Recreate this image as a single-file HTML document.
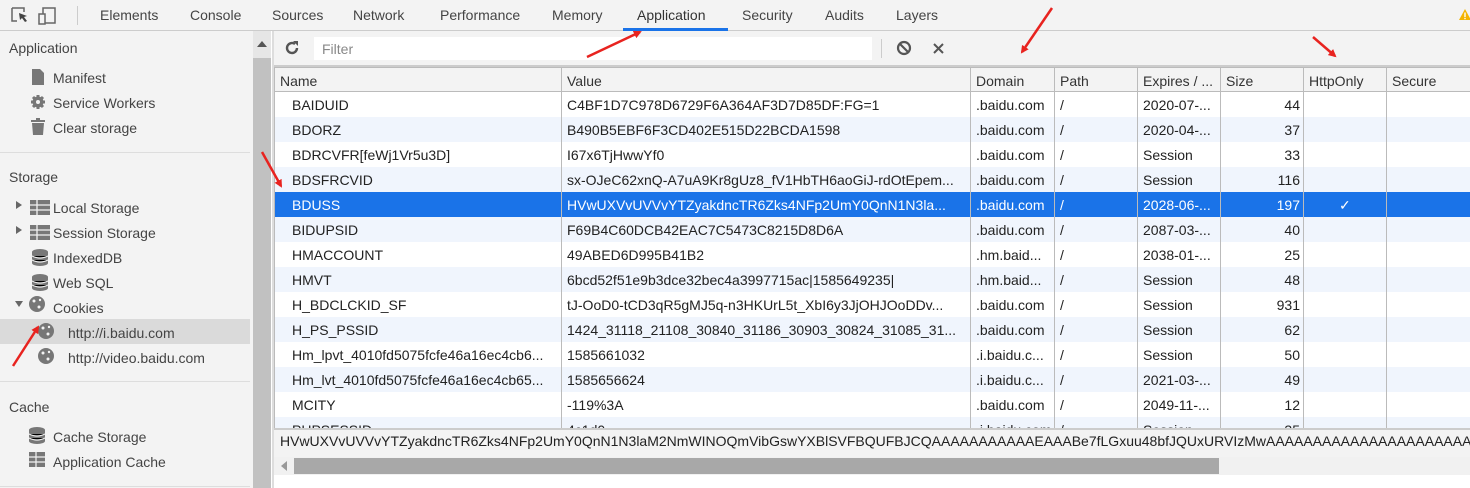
<!DOCTYPE html>
<html><head><meta charset="utf-8"><style>
*{margin:0;padding:0;box-sizing:border-box}
body{width:1470px;height:488px;overflow:hidden;background:#fff;font-family:"Liberation Sans",sans-serif;font-size:14px;color:#333;position:relative}
.a{position:absolute;white-space:nowrap}
#top{left:0;top:0;width:1470px;height:31px;background:#f3f3f3;border-bottom:1px solid #ccc}
.tab{top:7px;color:#444}
#side{left:0;top:31px;width:253px;height:457px;background:#f3f3f3}
.sh{color:#444;font-size:14px}
.si{color:#444}
#sb{left:253px;top:31px;width:18px;height:457px;background:#c1c1c1}
#main{left:272px;top:31px;width:1198px;height:457px;background:#f3f3f3}
.row{left:274px;width:1196px;height:25px}
.c{position:absolute;top:5px;overflow:hidden}
.vl{position:absolute;top:67px;width:1px;height:361px;background:#bbb}
</style></head><body>
<div id="top" class="a">
 <svg class="a" style="left:10px;top:6px" width="50" height="20"><path d="M2 2h12v4M2 2v13h5" stroke="#666" fill="none" stroke-width="1.5"/><path d="M9 7l8 3-3 1 3 4-2 1-3-4-2 2z" fill="#444"/><rect x="33" y="2" width="12" height="15" stroke="#666" fill="none" stroke-width="1.5"/><rect x="29" y="8" width="6" height="10" stroke="#666" fill="#f3f3f3" stroke-width="1.5"/></svg>
 <div class="a" style="left:77px;top:6px;width:1px;height:19px;background:#ccc"></div>
 <div class="a tab" style="left:100px">Elements</div>
 <div class="a tab" style="left:190px">Console</div>
 <div class="a tab" style="left:272px">Sources</div>
 <div class="a tab" style="left:353px">Network</div>
 <div class="a tab" style="left:440px">Performance</div>
 <div class="a tab" style="left:552px">Memory</div>
 <div class="a tab" style="left:637px;color:#333">Application</div>
 <div class="a" style="left:623px;top:28px;width:105px;height:3px;background:#1a73e8"></div>
 <div class="a tab" style="left:742px">Security</div>
 <div class="a tab" style="left:825px">Audits</div>
 <div class="a tab" style="left:896px">Layers</div>
 <svg class="a" style="left:1458px;top:8px" width="14" height="14"><path d="M7 1L13 12H1z" fill="#f4b400"/><rect x="6.3" y="4.5" width="1.4" height="4.5" fill="#fff"/><rect x="6.3" y="9.8" width="1.4" height="1.4" fill="#fff"/></svg>
</div>
<div id="side" class="a">
 <div class="a sh" style="left:9px;top:9px">Application</div>
 <svg class="a" style="left:30px;top:37px" width="16" height="100"><path d="M2 1h8l4 4v12H2z" fill="#777"/><circle cx="8" cy="34" r="5.5" fill="#777"/><g stroke="#777" stroke-width="3"><path d="M8 27v14M1 34h14M3 29l10 10M13 29L3 39"/></g><circle cx="8" cy="34" r="2" fill="#f3f3f3"/><rect x="1" y="52" width="14" height="2" fill="#777"/><rect x="6" y="50" width="4" height="2" fill="#777"/><path d="M2 55h12l-1 12H3z" fill="#777"/></svg>
 <div class="a si" style="left:53px;top:39px">Manifest</div>
 <div class="a si" style="left:53px;top:64px">Service Workers</div>
 <div class="a si" style="left:53px;top:89px">Clear storage</div>
 <div class="a" style="left:0;top:121px;width:250px;height:1px;background:#ddd"></div>
 <div class="a sh" style="left:9px;top:138px">Storage</div>
 <svg class="a" style="left:14px;top:166px" width="40" height="175">
  <path d="M2 4l6 4-6 4z M2 29l6 4-6 4z" fill="#666"/>
  <g fill="#777"><rect x="16" y="3" width="20" height="15"/><rect x="16" y="28" width="20" height="15"/></g>
  <g stroke="#f3f3f3" stroke-width="1.3"><path d="M16 8h20M16 13h20M23 3v15M16 33h20M16 38h20M23 28v15"/></g>
  <g fill="#777"><ellipse cx="26" cy="55" rx="8" ry="3"/><rect x="18" y="55" width="16" height="11"/><ellipse cx="26" cy="66" rx="8" ry="3"/><ellipse cx="26" cy="80" rx="8" ry="3"/><rect x="18" y="80" width="16" height="11"/><ellipse cx="26" cy="91" rx="8" ry="3"/></g>
  <g stroke="#f3f3f3" stroke-width="1.2"><path d="M18 59q8 4 16 0M18 63q8 4 16 0M18 84q8 4 16 0M18 88q8 4 16 0"/></g>
  <path d="M1 104l8 0-4 6z" fill="#666"/>
  <circle cx="23" cy="107" r="8" fill="#777"/><g fill="#f3f3f3"><circle cx="20" cy="104" r="1.5"/><circle cx="25" cy="110" r="1.5"/><circle cx="26" cy="103" r="1.2"/></g>
 </svg>
 <div class="a si" style="left:53px;top:169px">Local Storage</div>
 <div class="a si" style="left:53px;top:194px">Session Storage</div>
 <div class="a si" style="left:53px;top:219px">IndexedDB</div>
 <div class="a si" style="left:53px;top:244px">Web SQL</div>
 <div class="a si" style="left:53px;top:269px">Cookies</div>
 <div class="a" style="left:0;top:288px;width:250px;height:25px;background:#dadada"></div>
 <svg class="a" style="left:37px;top:290px" width="20" height="50"><circle cx="9" cy="10" r="8" fill="#777"/><circle cx="9" cy="35" r="8" fill="#777"/><g fill="#f3f3f3"><circle cx="6" cy="7" r="1.5"/><circle cx="11" cy="13" r="1.5"/><circle cx="12" cy="6" r="1.2"/><circle cx="6" cy="32" r="1.5"/><circle cx="11" cy="38" r="1.5"/><circle cx="12" cy="31" r="1.2"/></g></svg>
 <div class="a si" style="left:68px;top:294px">http://i.baidu.com</div>
 <div class="a si" style="left:68px;top:319px">http://video.baidu.com</div>
 <div class="a" style="left:0;top:350px;width:250px;height:1px;background:#ddd"></div>
 <div class="a sh" style="left:9px;top:368px">Cache</div>
 <svg class="a" style="left:28px;top:396px" width="20" height="40"><g fill="#777"><ellipse cx="9" cy="3" rx="8" ry="3"/><rect x="1" y="3" width="16" height="11"/><ellipse cx="9" cy="14" rx="8" ry="3"/><rect x="1" y="25" width="16" height="15"/></g><g stroke="#f3f3f3" stroke-width="1.2"><path d="M1 7q8 4 16 0M1 11q8 4 16 0M1 30h16M1 35h16M8 25v15"/></g></svg>
 <div class="a si" style="left:53px;top:398px">Cache Storage</div>
 <div class="a si" style="left:53px;top:423px">Application Cache</div>
 <div class="a" style="left:0;top:455px;width:250px;height:1px;background:#ddd"></div>
</div>
<div id="sb" class="a" style="background:#e6e6e6"><div class="a" style="left:0;top:27px;width:18px;height:430px;background:#c1c1c1"></div><svg class="a" style="left:4px;top:10px" width="10" height="6"><path d="M0 6L5 0l5 6z" fill="#555"/></svg></div>
<div id="main" class="a">
 <svg class="a" style="left:12px;top:9px" width="16" height="16"><path d="M13 8a5 5 0 1 1-2-4" stroke="#555" stroke-width="2.4" fill="none"/><path d="M9 1h5v5z" fill="#555"/></svg>
 <div class="a" style="left:42px;top:6px;width:558px;height:23px;background:#fff;color:#888;padding:4px 8px">Filter</div>
 <div class="a" style="left:609px;top:8px;width:1px;height:19px;background:#ccc"></div>
 <svg class="a" style="left:624px;top:9px" width="60" height="17"><circle cx="8" cy="8" r="6" stroke="#555" stroke-width="2.2" fill="none"/><path d="M4 4l8 8" stroke="#555" stroke-width="2.2"/><path d="M38 4l9 9M47 4l-9 9" stroke="#555" stroke-width="2"/></svg>
 <div class="a" style="left:0;top:34px;width:1198px;height:2px;background:#ccc"></div>
</div>
<div class="a" style="left:274px;top:67px;width:1196px;height:361px;background:#fff"></div>
<div class="a" style="left:274px;top:67px;width:1196px;height:25px;background:#f3f3f3;border-top:1px solid #bbb;border-bottom:1px solid #bbb"></div>
<div id="rows"></div>
<div class="a" style="left:274px;top:428px;width:1196px;height:2px;background:#ccc"></div>
<div class="a" style="left:280px;top:433px;color:#222">HVwUXVvUVVvYTZyakdncTR6Zks4NFp2UmY0QnN1N3laM2NmWINOQmVibGswYXBlSVFBQUFBJCQAAAAAAAAAAAEAAABe7fLGxuu48bfJQUxURVIzMwAAAAAAAAAAAAAAAAAAAAAAAAAA</div>
<div class="a" style="left:274px;top:457px;width:1196px;height:18px;background:#f1f1f1"></div>
<svg class="a" style="left:281px;top:461px" width="6" height="10"><path d="M6 0L0 5l6 5z" fill="#999"/></svg>
<div class="a" style="left:294px;top:458px;width:925px;height:16px;background:#a8a8a8"></div>
<div class="a" style="left:274px;top:475px;width:1196px;height:13px;background:#fff"></div>
<div class="a" style="left:272px;top:31px;width:2px;height:457px;background:#ddd"></div>
<svg class="a" style="left:0;top:0" width="1470" height="488">
<defs><marker id="m" markerWidth="8" markerHeight="8" refX="6" refY="4" orient="auto" markerUnits="userSpaceOnUse"><path d="M0 0L8 4L0 8z" fill="#e8231f"/></marker></defs>
<g stroke="#e8231f" stroke-width="2.5" marker-end="url(#m)" fill="none">
<path d="M587 57L640 32"/><path d="M1052 8L1022 52"/><path d="M1313 37L1335 56"/><path d="M262 152L281 186"/><path d="M13 366L38 327"/>
</g></svg>
<script>
var d=[["BAIDUID","C4BF1D7C978D6729F6A364AF3D7D85DF:FG=1",".baidu.com","2020-07-...","44"],
["BDORZ","B490B5EBF6F3CD402E515D22BCDA1598",".baidu.com","2020-04-...","37"],
["BDRCVFR[feWj1Vr5u3D]","I67x6TjHwwYf0",".baidu.com","Session","33"],
["BDSFRCVID","sx-OJeC62xnQ-A7uA9Kr8gUz8_fV1HbTH6aoGiJ-rdOtEpem...",".baidu.com","Session","116"],
["BDUSS","HVwUXVvUVVvYTZyakdncTR6Zks4NFp2UmY0QnN1N3la...",".baidu.com","2028-06-...","197"],
["BIDUPSID","F69B4C60DCB42EAC7C5473C8215D8D6A",".baidu.com","2087-03-...","40"],
["HMACCOUNT","49ABED6D995B41B2",".hm.baid...","2038-01-...","25"],
["HMVT","6bcd52f51e9b3dce32bec4a3997715ac|1585649235|",".hm.baid...","Session","48"],
["H_BDCLCKID_SF","tJ-OoD0-tCD3qR5gMJ5q-n3HKUrL5t_XbI6y3JjOHJOoDDv...",".baidu.com","Session","931"],
["H_PS_PSSID","1424_31118_21108_30840_31186_30903_30824_31085_31...",".baidu.com","Session","62"],
["Hm_lpvt_4010fd5075fcfe46a16ec4cb6...","1585661032",".i.baidu.c...","Session","50"],
["Hm_lvt_4010fd5075fcfe46a16ec4cb65...","1585656624",".i.baidu.c...","2021-03-...","49"],
["MCITY","-119%3A",".baidu.com","2049-11-...","12"],
["PHPSESSID","4c1d0...",".i.baidu.com","Session","35"]];
var h='',y=92;
d.forEach(function(r,i){var sel=i==4,bg=sel?'#1a73e8':(i%2?'#f0f5fd':'#fff'),col=sel?'#fff':'#222';
h+='<div class="a row" style="top:'+y+'px;height:'+(i==13?11:25)+'px;overflow:hidden;background:'+bg+';color:'+col+'">'+
'<div class="c" style="left:18px;width:268px">'+r[0]+'</div><div class="c" style="left:293px;width:405px">'+r[1]+'</div>'+
'<div class="c" style="left:702px;width:82px">'+r[2]+'</div><div class="c" style="left:786px">/</div>'+
'<div class="c" style="left:869px">'+r[3]+'</div><div class="c" style="left:949px;width:77px;text-align:right">'+r[4]+'</div>'+
(sel?'<div class="c" style="left:1065px">✓</div>':'')+'</div>';y+=25;});
h+='<div class="a" style="left:280px;top:73px">Name</div><div class="a" style="left:567px;top:73px">Value</div><div class="a" style="left:976px;top:73px">Domain</div><div class="a" style="left:1060px;top:73px">Path</div><div class="a" style="left:1143px;top:73px">Expires / ...</div><div class="a" style="left:1226px;top:73px">Size</div><div class="a" style="left:1309px;top:73px">HttpOnly</div><div class="a" style="left:1392px;top:73px">Secure</div>';
[561,970,1054,1137,1220,1303,1386].forEach(function(x){h+='<div class="vl" style="left:'+x+'px"></div>'});
h+='<div class="vl" style="left:274px"></div>';
document.getElementById('rows').innerHTML=h;
</script>
</body></html>
